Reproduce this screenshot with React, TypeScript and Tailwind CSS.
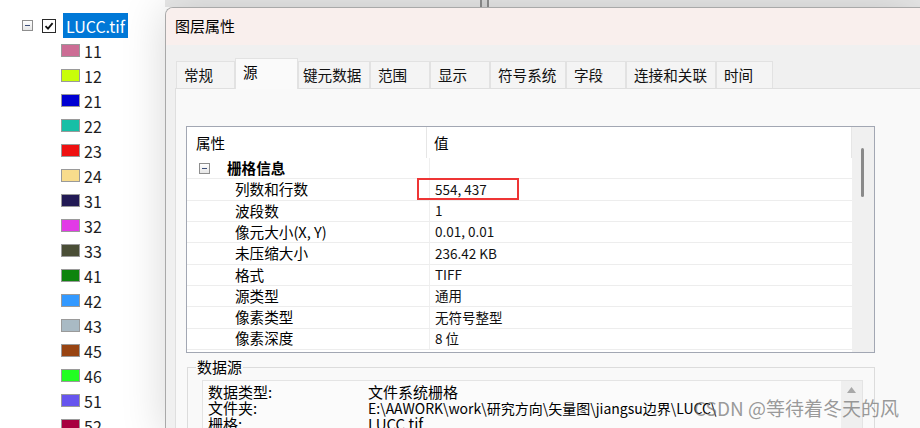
import React from "react";

const FONT = '"Noto Sans CJK SC", "Microsoft YaHei", "Noto Sans", sans-serif';

const legend: [string, string][] = [
  ["11", "#cc6d95"],
  ["12", "#c8fe0a"],
  ["21", "#0000d2"],
  ["22", "#17bfa6"],
  ["23", "#ee1111"],
  ["24", "#f8dc8c"],
  ["31", "#221a55"],
  ["32", "#e23ae6"],
  ["33", "#4a4e36"],
  ["41", "#0e840e"],
  ["42", "#3399ff"],
  ["43", "#a9bac4"],
  ["45", "#984412"],
  ["46", "#22ff22"],
  ["51", "#6655ee"],
  ["52", "#a80040"],
];

const tabs: { label: string; w: string; pl: string; active?: boolean }[] = [
  { label: "常规", w: "w-[59px]", pl: "pl-[7px]" },
  { label: "源", w: "w-[63px]", pl: "pl-[7px]", active: true },
  { label: "键元数据", w: "w-[72px]", pl: "pl-[4px]" },
  { label: "范围", w: "w-[60px]", pl: "pl-[7px]" },
  { label: "显示", w: "w-[60px]", pl: "pl-[7px]" },
  { label: "符号系统", w: "w-[76px]", pl: "pl-[7px]" },
  { label: "字段", w: "w-[60px]", pl: "pl-[7px]" },
  { label: "连接和关联", w: "w-[90px]", pl: "pl-[7px]" },
  { label: "时间", w: "w-[57px]", pl: "pl-[7px]" },
];

const rows: [string, string][] = [
  ["列数和行数", "554, 437"],
  ["波段数", "1"],
  ["像元大小(X, Y)", "0.01, 0.01"],
  ["未压缩大小", "236.42 KB"],
  ["格式", "TIFF"],
  ["源类型", "通用"],
  ["像素类型", "无符号整型"],
  ["像素深度", "8 位"],
];

function MinusBox({ className }: { className?: string }) {
  return (
    <div
      className={`w-[11px] h-[11px] border border-[#8e8e8e] bg-gradient-to-b from-white to-[#e6e6e6] flex items-center justify-center shrink-0 ${className ?? ""}`}
    >
      <div className="w-[5px] h-[1px] bg-[#3d4f7a]" />
    </div>
  );
}

export default function App() {
  return (
    <div
      className="relative w-[920px] h-[428px] overflow-hidden flex bg-white text-black"
      style={{ fontFamily: FONT }}
    >
      {/* Left tree panel */}
      <div className="w-[165px] shrink-0 pt-[13px] bg-white">
        <div className="h-[25px] flex items-center">
          <MinusBox className="ml-[22px]" />
          <div className="ml-[9px] w-[14px] h-[14px] border border-[#2a2a2a] bg-white flex items-center justify-center">
            <svg width="10" height="10" viewBox="0 0 10 10">
              <path d="M1.5 5.2 L4 7.6 L8.6 2.2" fill="none" stroke="#111" strokeWidth="1.8" />
            </svg>
          </div>
          <div className="ml-[7px] h-[25px] bg-[#0078d7] px-[3px] flex items-center text-white text-[16px] leading-none">
            LUCC.tif
          </div>
        </div>
        {legend.map(([n, c]) => (
          <div key={n} className="h-[25px] flex items-center pl-[61px]">
            <div className="w-[19px] h-[13px] border border-[#9a9a9a]" style={{ backgroundColor: c }} />
            <span className="ml-[4px] text-[16px] leading-none text-[#1e1e1e]">{n}</span>
          </div>
        ))}
      </div>

      {/* Right side */}
      <div className="flex-1 flex flex-col min-w-0">
        <div className="h-[7px] shrink-0 bg-[#e9e9e9] flex">
          <div className="w-[315px]" />
          <div className="w-[2px] bg-[#8f8f8f]" />
          <div className="w-[5px] bg-[#dadada]" />
          <div className="w-[2px] bg-[#8f8f8f]" />
        </div>

        {/* Dialog */}
        <div className="relative flex-1 flex flex-col rounded-tl-[8px] border-l border-t border-[#a9a9a9] bg-[#f0f0f0] shadow-[0_0_45px_rgba(0,0,0,0.16)]">
          <div className="h-[37px] shrink-0 bg-[#f9efed] rounded-tl-[7px] flex items-center pl-[9px] text-[15px]">
            图层属性
          </div>

          <div className="flex-1 flex flex-col pl-[9px]">
            {/* Tabs */}
            <div className="mt-[13px] h-[30px] flex items-end ml-[1px] relative z-10">
              {tabs.map((t) =>
                t.active ? (
                  <div
                    key={t.label}
                    className={`${t.w} h-[31px] mb-[-1px] border border-b-0 border-[#e2e2e2] bg-[#fafafa] flex items-start pt-[2px] ${t.pl} text-[14.6px] leading-[22px]`}
                  >
                    {t.label}
                  </div>
                ) : (
                  <div
                    key={t.label}
                    className={`${t.w} h-[27px] border border-b-0 border-[#e2e2e2] bg-[#f4f4f4] flex items-center ${t.pl} text-[14.6px] leading-none text-[#111]`}
                  >
                    {t.label}
                  </div>
                )
              )}
            </div>

            {/* Tab panel */}
            <div className="flex-1 bg-[#f9f9f9] border-l border-t border-[#dfdfdf] pl-[10px] pt-[37px]">
              {/* Property grid */}
              <div className="relative w-[689px] h-[227px] border border-[#a2a7b3] bg-white flex overflow-hidden">
                <div className="flex-1 flex flex-col">
                  <div className="h-[31px] flex shrink-0">
                    <div className="w-[240px] pl-[9px] flex items-center border-r border-[#e6e6e6] text-[14.6px]">
                      属性
                    </div>
                    <div className="flex-1 pl-[7px] flex items-center border-r border-[#e6e6e6] text-[14.6px]">
                      值
                    </div>
                  </div>
                  <div className="h-[21.33px] flex border-b border-[#ededed] shrink-0">
                    <div className="w-[242px] flex items-center">
                      <MinusBox className="ml-[12px]" />
                      <span className="ml-[17px] text-[14.6px] font-bold leading-none">栅格信息</span>
                    </div>
                    <div className="flex-1 border-l border-[#efefef]" />
                  </div>
                  {rows.map(([k, v]) => (
                    <div key={k} className="h-[21.33px] flex border-b border-[#ededed] shrink-0">
                      <div className="w-[242px] pl-[48px] flex items-center text-[14.6px] leading-none">
                        {k}
                      </div>
                      <div className="flex-1 border-l border-[#efefef] pl-[5px] flex items-center text-[13.5px] leading-none text-[#111]">
                        {v}
                      </div>
                    </div>
                  ))}
                </div>
                <div className="w-[22px] shrink-0 bg-[#f0f0f0] pt-[21px] pl-[9px]">
                  <div className="w-[3px] h-[49px] rounded-full bg-[#8a8a8a]" />
                </div>
                <div className="absolute left-[230px] top-[51px] w-[102px] h-[22px] border-2 border-[#ee3535]" />
              </div>

              {/* Data source group */}
              <fieldset className="mt-[4px] ml-[1px] w-[688px] h-[80px] border border-[#dcdcdc] pl-[8px]">
                <legend className="px-[1px] text-[15px] leading-[20px]">数据源</legend>
                <div className="mt-[3px] ml-[6px] w-[661px] h-[60px] border border-[#e4e4e4] bg-[#fbfbfb] flex">
                  <div className="flex-1 pt-[3px] pl-[5px] text-[15px] leading-[16px] overflow-hidden whitespace-nowrap">
                    <div className="flex">
                      <span className="w-[160px]">数据类型:</span>
                      <span>文件系统栅格</span>
                    </div>
                    <div className="flex">
                      <span className="w-[160px]">文件夹:</span>
                      <span className="text-[14px]">E:\AAWORK\work\研究方向\矢量图\jiangsu边界\LUCC\</span>
                    </div>
                    <div className="flex">
                      <span className="w-[160px]">栅格:</span>
                      <span>LUCC.tif</span>
                    </div>
                  </div>
                  <div className="w-[21px] shrink-0 bg-[#efefef] flex justify-center pt-[6px]">
                    <svg width="9" height="6" viewBox="0 0 9 6">
                      <path d="M0 6 L4.5 0 L9 6 Z" fill="#a8a8a8" />
                    </svg>
                  </div>
                </div>
              </fieldset>
            </div>
          </div>
        </div>
      </div>

      {/* Watermark */}
      <div className="absolute left-[694px] top-[394px] text-[19px] leading-[28px] text-[#6e6e6e]/70 whitespace-nowrap pointer-events-none">
        CSDN @等待着冬天的风
      </div>
    </div>
  );
}
